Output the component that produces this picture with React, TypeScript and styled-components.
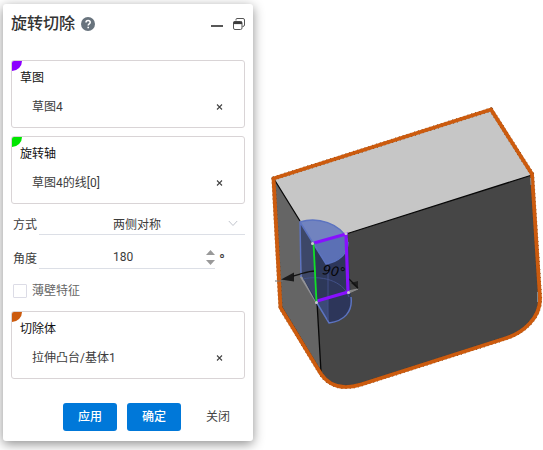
import React, { useState } from "react";
import styled, { createGlobalStyle } from "styled-components";

const GlobalStyle = createGlobalStyle`
  * { box-sizing: border-box; }
  body {
    margin: 0;
    background: #fff;
    color: #3c3c3c;
    font: 12px/16px Roboto, "Noto Sans CJK SC", sans-serif;
  }
  button, input, select { font: inherit; color: inherit; }
`;

const Workspace = styled.main`
  display: flex;
  align-items: flex-start;
  min-height: 100vh;
  padding-left: 3px;
  overflow: hidden;
`;

const Panel = styled.form`
  position: relative;
  z-index: 1;
  flex: none;
  width: 250px;
  margin-top: 4px;
  padding: 0 8px 10px;
  background: #fff;
  border-radius: 3px;
  box-shadow: 0 3px 12px rgba(0, 0, 0, 0.45);
`;

const Header = styled.header`
  display: flex;
  align-items: center;
  height: 40px;
  margin-bottom: 16px;
`;

const Title = styled.h1`
  margin: 0 6px 0 0;
  font-size: 16px;
  font-weight: 500;
  line-height: 24px;
  color: #333;
`;

const IconButton = styled.button`
  display: flex;
  padding: 0;
  border: 0;
  background: none;
  cursor: pointer;
`;

const WindowControls = styled.div`
  display: flex;
  gap: 8px;
  margin-left: auto;
`;

const SelectionBox = styled.section`
  position: relative;
  height: 68px;
  padding: 9px 8px 7px;
  border: 1px solid #d9d4d6;
  border-radius: 3px;
  overflow: hidden;
`;

const ColorCorner = styled.span<{ $color: string }>`
  position: absolute;
  top: 0;
  left: 0;
  width: 10px;
  height: 10px;
  border-bottom-right-radius: 10px;
  background: ${(p) => p.$color};
`;

const SelectionTitle = styled.h2`
  margin: 0 0 13px;
  font-size: 12px;
  font-weight: 400;
  line-height: 16px;
  color: #111;
`;

const SelectionItem = styled.div`
  display: flex;
  align-items: center;
  justify-content: space-between;
  padding: 0 13px 0 12px;
`;

const Selections = styled.div`
  display: grid;
  gap: 8px;
`;

const Field = styled.div`
  display: flex;
  align-items: flex-end;
  height: 23px;
  margin-top: 8px;
  padding-left: 2px;

  & + & { margin-top: 11px; }
`;

const FieldLabel = styled.label`
  width: 26px;
  padding-bottom: 2px;
`;

const ControlWrap = styled.div`
  position: relative;
  display: flex;
  flex: 1;
  border-bottom: 1px solid #dcdfe6;
`;

const Select = styled.select`
  width: 100%;
  height: 22px;
  padding: 3px 0 0 74px;
  border: 0;
  outline: 0;
  background: none;
  appearance: none;
`;

const NumberInput = styled.input`
  width: 100%;
  height: 22px;
  padding: 0 24px 0 74px;
  border: 0;
  outline: 0;
  background: none;
`;

const Chevron = styled.svg`
  position: absolute;
  right: 7px;
  top: 8px;
  pointer-events: none;
`;

const Stepper = styled.div`
  position: absolute;
  right: 0;
  top: 4px;
  display: grid;
  gap: 5px;
`;

const Unit = styled.span`
  width: 30px;
  padding-left: 4px;
  font-size: 16px;
`;

const CheckLabel = styled.label`
  display: flex;
  align-items: center;
  gap: 5px;
  height: 16px;
  margin: 14px 0 12px 2px;
  color: #666;
`;

const Checkbox = styled.input`
  width: 14px;
  height: 14px;
  margin: 0;
  border: 1px solid #dcdce6;
  border-radius: 1px;
  background: #fff;
  appearance: none;

  &:checked { background: #0078d7; }
`;

const Footer = styled.footer`
  display: flex;
  justify-content: flex-end;
  gap: 10px;
  margin-top: 24px;
`;

const ActionButton = styled.button<{ $primary?: boolean }>`
  width: 54px;
  height: 28px;
  padding: 0;
  border: 0;
  border-radius: 3px;
  background: ${(p) => (p.$primary ? "#0078d9" : "transparent")};
  color: ${(p) => (p.$primary ? "#fff" : "#444")};
  font-weight: ${(p) => (p.$primary ? 500 : 400)};
  cursor: pointer;
`;

const Viewport = styled.section`
  flex: 1;
  min-width: 0;
`;

const Scene = styled.svg`
  display: block;
  width: 100%;
  height: auto;
`;

type SelectionProps = { title: string; item: string; color: string };

function Selection({ title, item, color }: SelectionProps) {
  return (
    <SelectionBox>
      <ColorCorner $color={color} />
      <SelectionTitle>{title}</SelectionTitle>
      <SelectionItem>
        <span>{item}</span>
        <IconButton type="button" aria-label={`移除${item}`}>
          <svg width="7" height="16" viewBox="0 0 7 16">
            <path d="M1 5.5l5 5M6 5.5l-5 5" stroke="#444" strokeWidth="1.1" />
          </svg>
        </IconButton>
      </SelectionItem>
    </SelectionBox>
  );
}

function Model() {
  const outline =
    "M273.5 178.5L491 109.5L532 174L540 298C540.5 318 523 333 505 338.5L361 384.5C343 390 329 386 321 374L280.5 307.5Z";
  return (
    <Scene viewBox="253 0 290 450" role="img" aria-label="旋转切除预览">
      <path d={outline} fill="#464646" />
      <path d="M274 179L314 244L321 374L281 307Z" fill="#656565" />
      <path d="M274 179L491 110L532 175L346 234L314 244Z" fill="#c6c6c6" />
      <path
        d="M274 179L300 221M346 234L532 175M317 302L321 372M281 306L321 372"
        fill="none"
        stroke="#080808"
        strokeWidth="1.3"
      />
      <path d={outline} fill="none" stroke="#5d2b0a" strokeWidth="4.2" strokeLinejoin="round" strokeDasharray="1 3" />
      <path d={outline} fill="none" stroke="#cc5b0e" strokeWidth="3.8" strokeLinejoin="round" />
      <path d="M530.5 178L531 185M537.5 292V302" stroke="#858a8d" strokeWidth="1" />

      <path d="M301 276L317 302" stroke="#929296" strokeWidth="3" />
      <path d="M300 222L326 264L348 244L351 302C352 312 344 321 329 323L316 302L302 276Z" fill="#2d3859" />
      <path d="M300 222L314 243L317 301L302 276Z" fill="#3d4768" />
      <path d="M316 302L328 299L329 323Z" fill="#3c4a78" />
      <path d="M326 264L348 244L350 301C352 311 344 321 329 323Z" fill="#2d365a" />
      <path d="M300 222C318 216 342 225 348 240C349 252 337 262 326 264Z" fill="#7183bf" />
      <path d="M314 243L346 234C351 250 339 262 326 264Z" fill="#5b70b5" />
      <path
        d="M301 277L300 222C318 216 340 224 347 239M348 242C348 254 338 262 326 264L300 222M317 303L329 323C344 321 353 312 351 297"
        fill="none"
        stroke="#5c73c0"
        strokeWidth="1.5"
      />
      <path d="M303 279C320 275 343 280 349 297M328 264V320" fill="none" stroke="#425188" />

      <path d="M275 281H283" stroke="#737373" strokeWidth="1" />
      <path d="M281 279.5L294 272.5V281.5Z" fill="#1b1b1b" />
      <path d="M293 276L300 274C307 272 310 271 315 271" fill="none" stroke="#111" strokeWidth="1.3" />
      <path d="M348 291L358 289L349 293Z" fill="#888" stroke="#888" />
      <path d="M351 283L358 281V289Z" fill="#202020" />
      <path d="M349 279L358 288" stroke="#111" strokeWidth="1.3" />
      <path d="M314 243L346 234L348 292L317 301" fill="none" stroke="#8710ff" strokeWidth="3.2" />
      <path d="M313.5 243L316.5 302" stroke="#10df27" strokeWidth="1.8" />
      <text
        x="322"
        y="274"
        transform="rotate(8 322 274)"
        fill="#050505"
        fontFamily="DejaVu Sans, sans-serif"
        fontSize="13"
        fontStyle="italic"
      >
        90°
      </text>
      {[[312.5, 243.5], [346, 233.5], [316.5, 302.5], [348.5, 292.5]].map(([x, y]) => (
        <circle key={x} cx={x} cy={y} r="1.5" fill="#c8c8cf" />
      ))}
    </Scene>
  );
}

export default function App() {
  const [mode, setMode] = useState("两侧对称");
  const [angle, setAngle] = useState(180);
  return (
    <Workspace>
      <GlobalStyle />
      <Panel onSubmit={(e) => e.preventDefault()}>
        <Header>
          <Title>旋转切除</Title>
          <IconButton type="button" aria-label="帮助">
            <svg width="14" height="14" viewBox="0 0 14 14" fill="none">
              <circle cx="7" cy="7" r="7" fill="#68737d" />
              <path d="M5 5.4C5 2.8 9.2 2.8 9.2 5.4C9.2 6.8 7.2 6.8 7.2 8.4" stroke="#fff" strokeWidth="1.5" />
              <path d="M6.4 9.7h1.6v1.5H6.4z" fill="#fff" />
            </svg>
          </IconButton>
          <WindowControls>
            <IconButton type="button" aria-label="最小化">
              <svg width="14" height="14" viewBox="0 0 14 14">
                <path d="M2 9h12" stroke="#444" strokeWidth="1.8" />
              </svg>
            </IconButton>
            <IconButton type="button" aria-label="还原窗口">
              <svg width="14" height="14" viewBox="0 0 14 14" fill="none" stroke="#555">
                <path d="M5 3.5V2.5Q5 1.5 6 1.5h6Q13.5 1.5 13.5 3v5Q13.5 9.5 11.5 9.5" />
                <rect x="2.5" y="4.5" width="8.5" height="8" rx="1.5" />
                <path d="M2.5 5.8H11" strokeWidth="2.6" stroke="#3c3c3c" />
              </svg>
            </IconButton>
          </WindowControls>
        </Header>

        <Selections>
          <Selection title="草图" item="草图4" color="#8c00ff" />
          <Selection title="旋转轴" item="草图4的线[0]" color="#00e600" />
        </Selections>

        <Field>
          <FieldLabel htmlFor="mode">方式</FieldLabel>
          <ControlWrap>
            <Select id="mode" value={mode} onChange={(e) => setMode(e.target.value)}>
              <option>两侧对称</option>
            </Select>
            <Chevron width="10" height="7" viewBox="0 0 10 7" fill="none">
              <path d="M.8 1L5 5.5L9.2 1" stroke="#c0c4cc" />
            </Chevron>
          </ControlWrap>
        </Field>
        <Field>
          <FieldLabel htmlFor="angle">角度</FieldLabel>
          <ControlWrap>
            <NumberInput id="angle" value={angle} onChange={(e) => setAngle(Number(e.target.value) || 0)} />
            <Stepper>
              <IconButton type="button" aria-label="增加角度" onClick={() => setAngle(angle + 1)}>
                <svg width="9" height="5" viewBox="0 0 9 5"><path d="M4.5 0L9 5H0Z" fill="#999" /></svg>
              </IconButton>
              <IconButton type="button" aria-label="减少角度" onClick={() => setAngle(angle - 1)}>
                <svg width="9" height="5" viewBox="0 0 9 5"><path d="M4.5 5L9 0H0Z" fill="#999" /></svg>
              </IconButton>
            </Stepper>
          </ControlWrap>
          <Unit>°</Unit>
        </Field>
        <CheckLabel>
          <Checkbox type="checkbox" />
          薄壁特征
        </CheckLabel>

        <Selection title="切除体" item="拉伸凸台/基体1" color="#cc5b0e" />

        <Footer>
          <ActionButton type="button" $primary>应用</ActionButton>
          <ActionButton type="submit" $primary>确定</ActionButton>
          <ActionButton type="button">关闭</ActionButton>
        </Footer>
      </Panel>
      <Viewport>
        <Model />
      </Viewport>
    </Workspace>
  );
}
